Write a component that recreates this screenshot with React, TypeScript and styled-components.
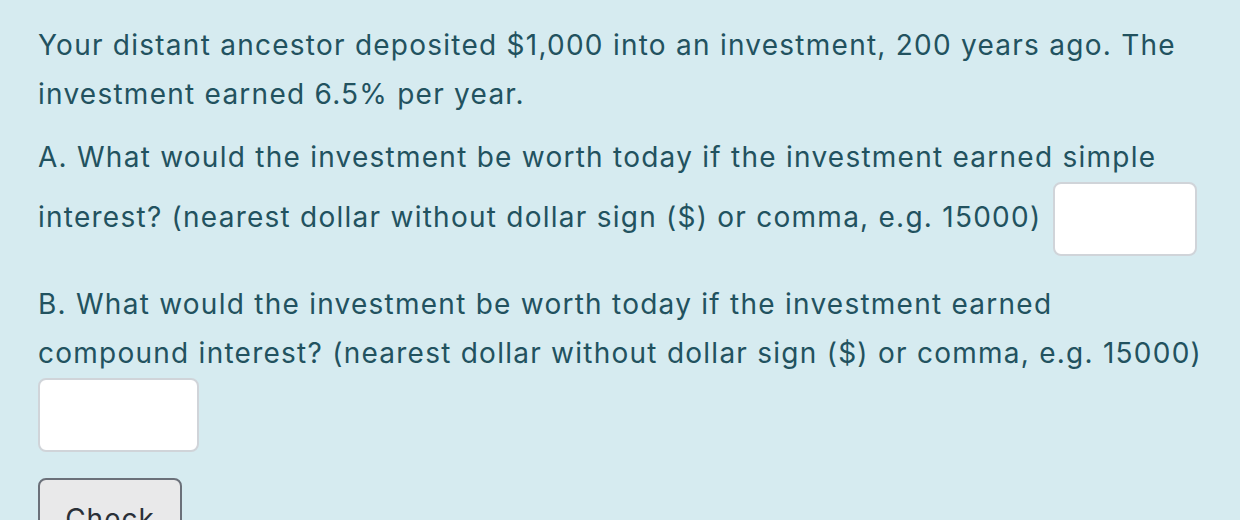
import React from 'react';
import styled, { createGlobalStyle } from 'styled-components';

const GlobalStyle = createGlobalStyle`
  html, body {
    margin: 0;
    padding: 0;
    background: #d6ebf0;
  }
`;

export default function App() {
  return (
    <>
      <GlobalStyle />
      <Page>
        <Intro>
          Your distant ancestor deposited $1,000 into an investment, 200 years ago. The investment earned 6.5% per
          year.
        </Intro>
        <Question>
          A. What would the investment be worth today if the investment earned simple interest? (nearest dollar
          without dollar sign ($) or comma, e.g. 15000)
          <Answer type="text" width={144} />
        </Question>
        <Question spaced>
          B. What would the investment be worth today if the investment earned compound interest? (nearest dollar
          without dollar sign ($) or comma, e.g. 15000)
          <Answer type="text" width={161} block />
        </Question>
        <CheckButton>Check</CheckButton>
      </Page>
    </>
  );
}

const Page = styled.div`
  box-sizing: border-box;
  width: 1240px;
  height: 520px;
  overflow: hidden;
  padding: 21px 32px 0 38px;
  background: #d6ebf0;
  color: #22525f;
  font-family: Inter, 'Noto Sans', sans-serif;
  font-size: 28px;
  letter-spacing: 1.25px;
  line-height: 49px;
`;

const Intro = styled.p`
  margin: 0 0 14px;
`;

const Question = styled.div<{ spaced?: boolean }>`
  margin-top: ${({ spaced }) => (spaced ? '24px' : '0')};
`;

const Answer = styled.input<{ width: number; block?: boolean }>`
  box-sizing: border-box;
  display: ${({ block }) => (block ? 'block' : 'inline-block')};
  vertical-align: middle;
  width: ${({ width }) => width}px;
  height: 74px;
  margin-left: ${({ block }) => (block ? '0' : '12px')};
  border: 2px solid #d0d4d9;
  border-radius: 8px;
  background: #fff;
  outline: none;
`;

const CheckButton = styled.button`
  box-sizing: border-box;
  display: block;
  width: 144px;
  height: 70px;
  margin-top: 26px;
  padding: 12px 0 0;
  border: 2px solid #6b7079;
  border-radius: 8px;
  background: #e9e9ea;
  color: #2a3038;
  font-family: Inter, 'Noto Sans', sans-serif;
  font-size: 28px;
  letter-spacing: 1px;
  line-height: 34px;
  text-align: center;
  vertical-align: top;
`;
